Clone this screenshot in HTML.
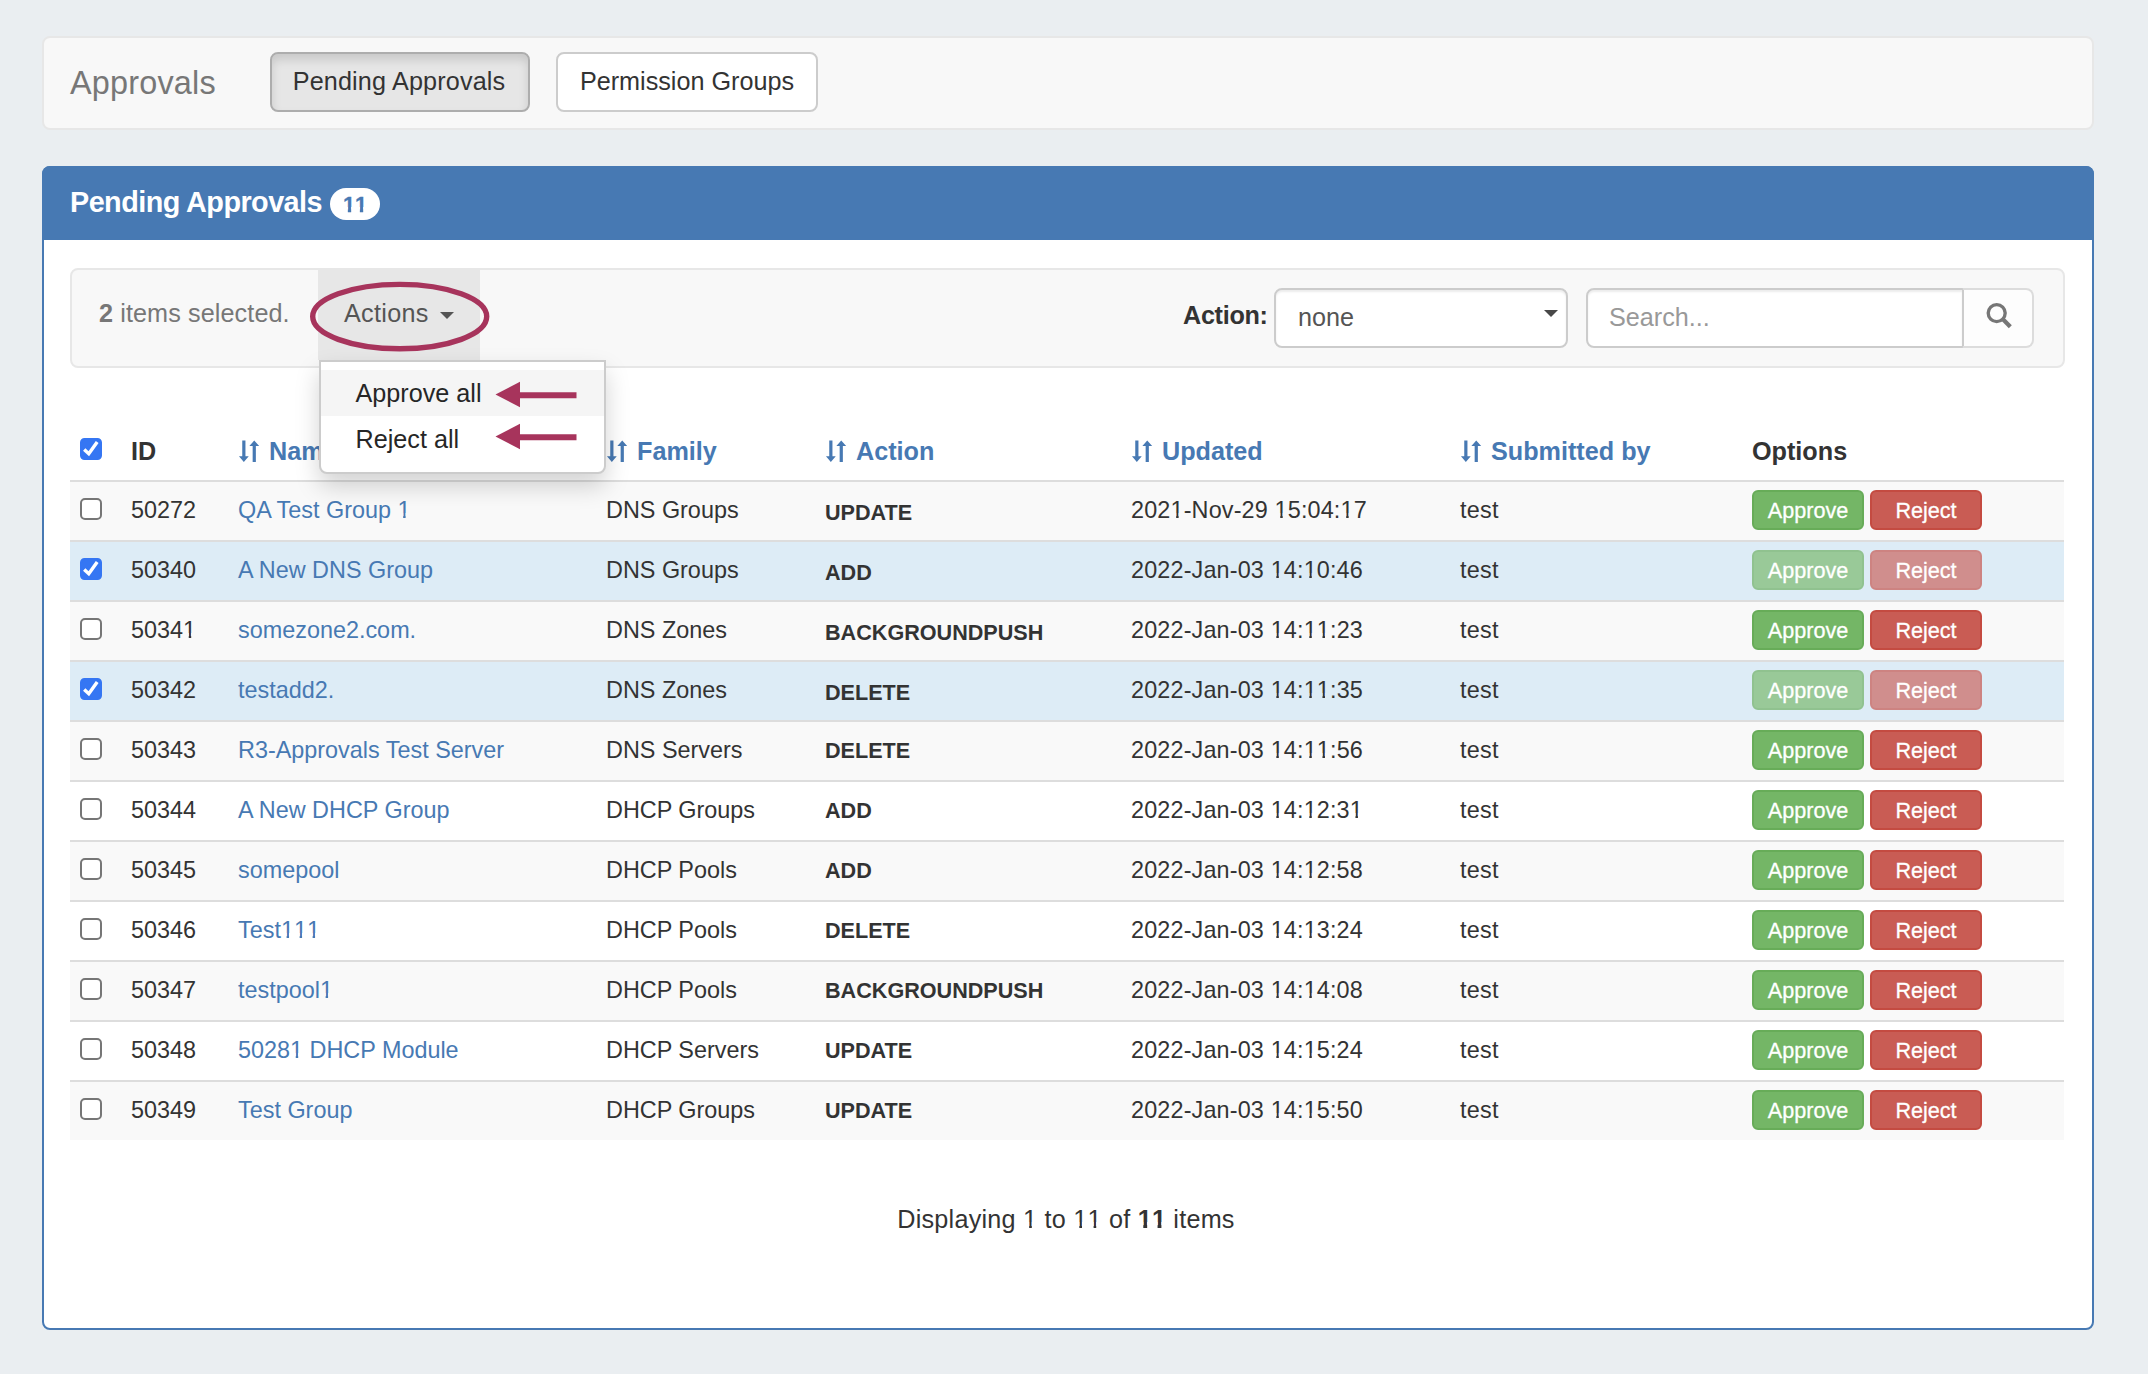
<!DOCTYPE html>
<html>
<head>
<meta charset="utf-8">
<title>Approvals</title>
<style>
*{box-sizing:border-box;margin:0;padding:0}
html,body{width:2148px;height:1374px;overflow:hidden}
body{background:#eaeef1;font-family:"Liberation Sans",sans-serif;color:#333;position:relative;font-size:25.2px}
.abs{position:absolute}
/* top nav */
#nav{left:42px;top:36px;width:2052px;height:94px;background:#f8f8f8;border:2px solid #e7e7e7;border-radius:8px}
#brand{left:70px;top:63px;letter-spacing:.2px;font-size:32.4px;line-height:40px;color:#777;white-space:nowrap}
.tbtn{top:52px;height:60px;border-radius:8px;font-size:25.2px;line-height:54px;text-align:center;color:#333;white-space:nowrap}
#b1{left:270px;width:260px;letter-spacing:.15px;padding-right:2px;background:#e6e6e6;border:2px solid #adadad;box-shadow:inset 0 6px 10px rgba(0,0,0,.125)}
#b2{left:556px;width:262px;background:#fff;border:2px solid #ccc}
/* panel */
#panel{left:42px;top:166px;width:2052px;height:1164px;background:#fff;border:2px solid #4779b3;border-radius:8px}
#phead{left:42px;top:166px;width:2052px;height:74px;background:#4779b3;border-radius:8px 8px 0 0}
#ptitle{left:70px;top:182px;letter-spacing:-0.55px;font-size:28.8px;line-height:40px;font-weight:bold;color:#fff;white-space:nowrap}
#badge{left:330px;top:188px;width:50px;height:32px;border-radius:16px;background:#fff;color:#4779b3;font-weight:bold;font-size:21.6px;line-height:33px;text-align:center;-webkit-text-stroke:.3px #4779b3}
/* toolbar */
#well{left:70px;top:268px;width:1995px;height:100px;background:#f8f8f8;border:2px solid #e7e7e7;border-radius:8px}
#sel{left:99px;top:292.7px;letter-spacing:.1px;font-size:25.2px;line-height:40px;color:#777;white-space:nowrap}
#actbg{left:318px;top:270px;width:162px;height:90px;background:#e7e7e7}
#acttxt{left:344px;top:292.7px;letter-spacing:.3px;font-size:25.2px;line-height:40px;color:#555;white-space:nowrap}
#caret{left:440px;top:311.5px;width:0;height:0;border-left:7px solid transparent;border-right:7px solid transparent;border-top:7px solid #555}
#albl{left:1183px;top:295px;letter-spacing:-0.3px;font-size:25.2px;line-height:40px;font-weight:bold;color:#333;white-space:nowrap}
#select{left:1274px;top:288px;width:294px;height:60px;background:#fff;border:2px solid #ccc;border-radius:8px;box-shadow:inset 0 2px 2px rgba(0,0,0,.075)}
#seltxt{left:1298px;top:297px;font-size:25.2px;line-height:40px;color:#555}
#selcar{left:1544px;top:310px;width:0;height:0;border-left:7px solid transparent;border-right:7px solid transparent;border-top:7px solid #484848}
#search{left:1586px;top:288px;width:378px;height:60px;background:#fff;border:2px solid #ccc;border-radius:8px 0 0 8px;box-shadow:inset 0 2px 2px rgba(0,0,0,.075)}
#stxt{left:1609px;top:297px;font-size:25.2px;line-height:40px;color:#999}
#sbtn{left:1962px;top:288px;width:72px;height:60px;background:#fdfdfd;border:2px solid #dcdcdc;border-left-color:#ccc;border-radius:0 8px 8px 0}
/* table */
.th{top:431px;font-size:25.2px;line-height:40px;font-weight:bold;white-space:nowrap;color:#4779b3}
.th.k{color:#333}
#hline{left:70px;top:480px;width:1994px;height:3px;background:#ddd}
.row{left:70px;width:1994px;height:60px;border-top:2px solid #ddd;background:#f9f9f9}
.row.w{background:#fff}
.row.s{background:#ddecf6}
.row>span,.row>a,.row>b,.row>i{position:absolute;top:8px;line-height:40px;font-size:23.4px;white-space:nowrap;font-style:normal}
.row .id{left:61px}
.row .nm{left:168px;color:#4779b3}
.row .fm{left:536px}
.row .ac{left:755px;font-weight:bold;font-size:21.6px;top:8.9px}
.row.lo .ac{top:11.3px}
.row .up{left:1061px;letter-spacing:.15px}
.row .sb{left:1390px;letter-spacing:.3px}
.row .ok,.row .no{top:8px;height:40px;width:112px;border-radius:6px;color:#fff;text-align:center;line-height:37.6px;font-size:21.6px;-webkit-text-stroke:.3px #fff}
.row .ok{left:1682px;background:#74b666;border:2px solid #67ac58}
.row .no{left:1800px;background:#c95c54;border:2px solid #c44b41}
.row.s .ok{background:#99c998;border-color:#90c28f}
.row.s .no{background:#d08e8d;border-color:#cd8381}
.cb{position:absolute;left:10px;top:16px;width:22px;height:22px;border:2px solid #767676;border-radius:5px;background:#fff}
.cb.on{background:#3576f3;border-color:#3576f3;border-radius:4.5px}
.si{position:absolute;left:0;top:9px}
.tl{margin-left:31px}
#foot{left:0;top:1199px;width:2132px;letter-spacing:.23px;text-align:center;font-size:25.2px;line-height:40px;color:#333}
.o{display:inline-block;line-height:1;clip-path:polygon(0 0,100% 0,100% .6em,.348em .6em,.348em 1em,.243em 1em,.243em .6em,0 .6em)}
.o.b{clip-path:polygon(0 0,100% 0,100% .6em,.379em .6em,.379em 1em,.225em 1em,.225em .6em,0 .6em)}
/* dropdown */
#menu{left:319px;top:360px;width:287px;height:114px;background:#fff;border:2px solid #ccc;border-radius:0 0 8px 8px;box-shadow:0 12px 24px rgba(0,0,0,.175)}
#mi1bg{left:321px;top:370px;width:283px;height:46px;background:#f5f5f5}
.mi{left:355.5px;font-size:25.2px;line-height:40px;color:#262626;white-space:nowrap}
</style>
</head>
<body>
<div id="nav" class="abs"></div>
<div id="brand" class="abs">Approvals</div>
<div id="b1" class="abs tbtn">Pending Approvals</div>
<div id="b2" class="abs tbtn">Permission Groups</div>

<div id="panel" class="abs"></div>
<div id="phead" class="abs"></div>
<div id="ptitle" class="abs">Pending Approvals</div>
<div id="badge" class="abs"><span class="o b">1</span><span class="o b">1</span></div>

<div id="well" class="abs"></div>
<div id="sel" class="abs"><b>2</b> items selected.</div>
<div id="actbg" class="abs"></div>
<div id="acttxt" class="abs">Actions</div>
<div id="caret" class="abs"></div>
<div id="albl" class="abs">Action:</div>
<div id="select" class="abs"></div>
<div id="seltxt" class="abs">none</div>
<div id="selcar" class="abs"></div>
<div id="search" class="abs"></div>
<div id="stxt" class="abs">Search...</div>
<div id="sbtn" class="abs"></div>
<svg class="abs" style="left:1982px;top:300px" width="34" height="34" viewBox="0 0 34 34"><circle cx="14.7" cy="13.1" r="8.5" fill="none" stroke="#767676" stroke-width="3.35"/><path d="M20.200 18.600L28.300 26.700" stroke="#767676" stroke-width="4.2"/></svg>

<!--TABLE-->
<div class="cb on abs" style="left:80px;top:438px"><svg viewBox="0 0 22 22" width="22" height="22" style="position:absolute;left:-2px;top:-2px"><path d="M4.200 11.500L8.800 15.800L17.200 3.900" fill="none" stroke="#fff" stroke-width="3.400"/></svg></div>
<div class="th k abs" style="left:131px">ID</div>
<div class="th abs" style="left:238px"><svg class="si" viewBox="0 0 22 22" width="22" height="22"><path d="M4.250 0.500h3.200v15.800h3.300L5.850 21.900L0.950 16.300h3.300zM14.660 21.900h3.200v-15.800h3.300L16.260 0.500L11.360 6.100h3.300z" fill="#4779b3"/></svg><span class="tl">Name</span></div>
<div class="th abs" style="left:606px"><svg class="si" viewBox="0 0 22 22" width="22" height="22"><path d="M4.250 0.500h3.200v15.800h3.300L5.850 21.900L0.950 16.300h3.300zM14.660 21.900h3.200v-15.800h3.300L16.260 0.500L11.360 6.100h3.300z" fill="#4779b3"/></svg><span class="tl">Family</span></div>
<div class="th abs" style="left:825px"><svg class="si" viewBox="0 0 22 22" width="22" height="22"><path d="M4.250 0.500h3.200v15.800h3.300L5.850 21.900L0.950 16.300h3.300zM14.660 21.900h3.200v-15.800h3.300L16.260 0.500L11.360 6.100h3.300z" fill="#4779b3"/></svg><span class="tl">Action</span></div>
<div class="th abs" style="left:1131px"><svg class="si" viewBox="0 0 22 22" width="22" height="22"><path d="M4.250 0.500h3.200v15.800h3.300L5.850 21.900L0.950 16.300h3.300zM14.660 21.900h3.200v-15.800h3.300L16.260 0.500L11.360 6.100h3.300z" fill="#4779b3"/></svg><span class="tl">Updated</span></div>
<div class="th abs" style="left:1460px"><svg class="si" viewBox="0 0 22 22" width="22" height="22"><path d="M4.250 0.500h3.200v15.800h3.300L5.850 21.900L0.950 16.300h3.300zM14.660 21.900h3.200v-15.800h3.300L16.260 0.500L11.360 6.100h3.300z" fill="#4779b3"/></svg><span class="tl">Submitted by</span></div>
<div class="th k abs" style="left:1752px">Options</div>
<div id="hline" class="abs"></div>
<div class="row abs lo" style="top:480px"><div class="cb"></div><span class="id">50272</span><a class="nm">QA Test Group <span class="o">1</span></a><span class="fm">DNS Groups</span><b class="ac">UPDATE</b><span class="up">202<span class="o">1</span>-Nov-29 <span class="o">1</span>5:04:<span class="o">1</span>7</span><span class="sb">test</span><i class="ok">Approve</i><i class="no">Reject</i></div>
<div class="row abs s lo" style="top:540px"><div class="cb on"><svg viewBox="0 0 22 22" width="22" height="22" style="position:absolute;left:-2px;top:-2px"><path d="M4.200 11.500L8.800 15.800L17.200 3.900" fill="none" stroke="#fff" stroke-width="3.400"/></svg></div><span class="id">50340</span><a class="nm">A New DNS Group</a><span class="fm">DNS Groups</span><b class="ac">ADD</b><span class="up">2022-Jan-03 <span class="o">1</span>4:<span class="o">1</span>0:46</span><span class="sb">test</span><i class="ok">Approve</i><i class="no">Reject</i></div>
<div class="row abs lo" style="top:600px"><div class="cb"></div><span class="id">5034<span class="o">1</span></span><a class="nm">somezone2.com.</a><span class="fm">DNS Zones</span><b class="ac">BACKGROUNDPUSH</b><span class="up">2022-Jan-03 <span class="o">1</span>4:<span class="o">1</span><span class="o">1</span>:23</span><span class="sb">test</span><i class="ok">Approve</i><i class="no">Reject</i></div>
<div class="row abs s lo" style="top:660px"><div class="cb on"><svg viewBox="0 0 22 22" width="22" height="22" style="position:absolute;left:-2px;top:-2px"><path d="M4.200 11.500L8.800 15.800L17.200 3.900" fill="none" stroke="#fff" stroke-width="3.400"/></svg></div><span class="id">50342</span><a class="nm">testadd2.</a><span class="fm">DNS Zones</span><b class="ac">DELETE</b><span class="up">2022-Jan-03 <span class="o">1</span>4:<span class="o">1</span><span class="o">1</span>:35</span><span class="sb">test</span><i class="ok">Approve</i><i class="no">Reject</i></div>
<div class="row abs" style="top:720px"><div class="cb"></div><span class="id">50343</span><a class="nm">R3-Approvals Test Server</a><span class="fm">DNS Servers</span><b class="ac">DELETE</b><span class="up">2022-Jan-03 <span class="o">1</span>4:<span class="o">1</span><span class="o">1</span>:56</span><span class="sb">test</span><i class="ok">Approve</i><i class="no">Reject</i></div>
<div class="row abs w" style="top:780px"><div class="cb"></div><span class="id">50344</span><a class="nm">A New DHCP Group</a><span class="fm">DHCP Groups</span><b class="ac">ADD</b><span class="up">2022-Jan-03 <span class="o">1</span>4:<span class="o">1</span>2:3<span class="o">1</span></span><span class="sb">test</span><i class="ok">Approve</i><i class="no">Reject</i></div>
<div class="row abs" style="top:840px"><div class="cb"></div><span class="id">50345</span><a class="nm">somepool</a><span class="fm">DHCP Pools</span><b class="ac">ADD</b><span class="up">2022-Jan-03 <span class="o">1</span>4:<span class="o">1</span>2:58</span><span class="sb">test</span><i class="ok">Approve</i><i class="no">Reject</i></div>
<div class="row abs w" style="top:900px"><div class="cb"></div><span class="id">50346</span><a class="nm">Test<span class="o">1</span><span class="o">1</span><span class="o">1</span></a><span class="fm">DHCP Pools</span><b class="ac">DELETE</b><span class="up">2022-Jan-03 <span class="o">1</span>4:<span class="o">1</span>3:24</span><span class="sb">test</span><i class="ok">Approve</i><i class="no">Reject</i></div>
<div class="row abs" style="top:960px"><div class="cb"></div><span class="id">50347</span><a class="nm">testpool<span class="o">1</span></a><span class="fm">DHCP Pools</span><b class="ac">BACKGROUNDPUSH</b><span class="up">2022-Jan-03 <span class="o">1</span>4:<span class="o">1</span>4:08</span><span class="sb">test</span><i class="ok">Approve</i><i class="no">Reject</i></div>
<div class="row abs w" style="top:1020px"><div class="cb"></div><span class="id">50348</span><a class="nm">5028<span class="o">1</span> DHCP Module</a><span class="fm">DHCP Servers</span><b class="ac">UPDATE</b><span class="up">2022-Jan-03 <span class="o">1</span>4:<span class="o">1</span>5:24</span><span class="sb">test</span><i class="ok">Approve</i><i class="no">Reject</i></div>
<div class="row abs" style="top:1080px"><div class="cb"></div><span class="id">50349</span><a class="nm">Test Group</a><span class="fm">DHCP Groups</span><b class="ac">UPDATE</b><span class="up">2022-Jan-03 <span class="o">1</span>4:<span class="o">1</span>5:50</span><span class="sb">test</span><i class="ok">Approve</i><i class="no">Reject</i></div>
<div id="foot" class="abs">Displaying <span class="o">1</span> to <span class="o">1</span><span class="o">1</span> of <b><span class="o b">1</span><span class="o b">1</span></b> items</div>
<!--/TABLE-->
<!--OVERLAY-->
<div id="menu" class="abs"></div>
<div id="mi1bg" class="abs"></div>
<div class="mi abs" style="top:373px">Approve all</div>
<div class="mi abs" style="top:419px">Reject all</div>
<svg class="abs" style="left:493.5px;top:381px" width="84" height="28" viewBox="0 0 84 28"><path d="M82.500 14.300H24" stroke="#a7345c" stroke-width="6" fill="none"/><path d="M1.500 13.600L26 0.800V26.300Z" fill="#a7345c"/></svg>
<svg class="abs" style="left:493.5px;top:423px" width="84" height="28" viewBox="0 0 84 28"><path d="M82.500 14.300H24" stroke="#a7345c" stroke-width="6" fill="none"/><path d="M1.500 13.600L26 0.800V26.300Z" fill="#a7345c"/></svg>
<svg class="abs" style="left:300px;top:272px" width="200" height="90" viewBox="0 0 200 90"><ellipse cx="99.7" cy="44.600" rx="87" ry="32.200" fill="none" stroke="#a7345c" stroke-width="5.400"/></svg>
<!--/OVERLAY-->
</body>
</html>
